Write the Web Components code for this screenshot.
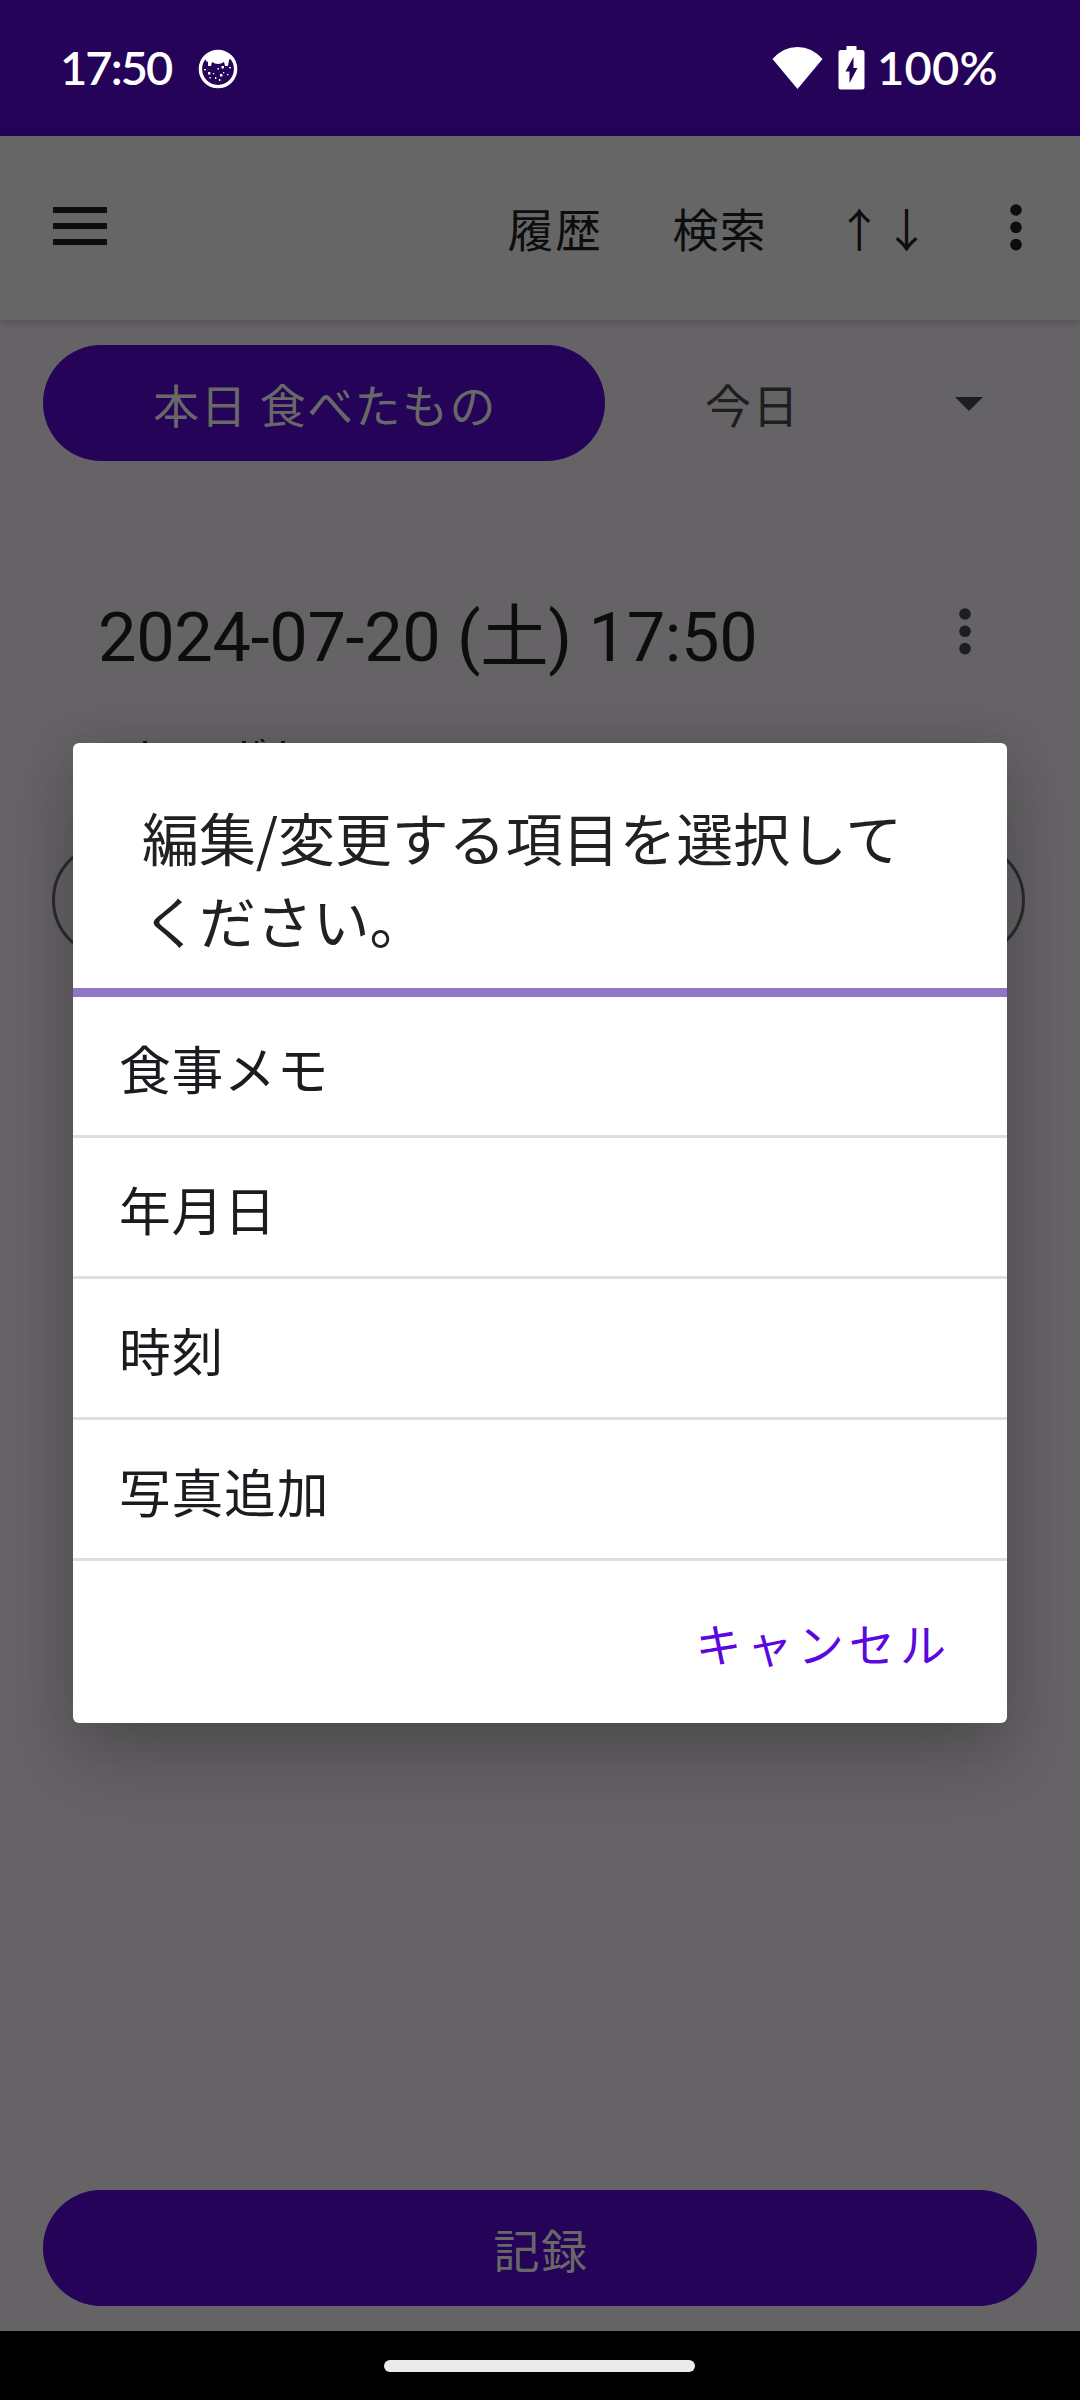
<!DOCTYPE html>
<html lang="ja">
<head>
<meta charset="utf-8">
<title>食事記録</title>
<style>
html,body{margin:0;padding:0}
body{width:1080px;height:2400px;overflow:hidden;background:#666366;font-family:"Noto Sans CJK JP",Roboto,sans-serif;font-size:46px}
</style>
</head>
<body>
<food-app></food-app>
<script>
const define = (name, html) => customElements.define(name, class extends HTMLElement {
  constructor() {
    super();
    this.attachShadow({ mode: 'open' }).innerHTML = html.trim();
  }
});

define('status-bar', `
<style>
:host{display:flex;align-items:center;height:136px;background:#250359;color:#fff;box-sizing:border-box;padding:2px 84px 0 60px;font:600 47px/60px Lato,sans-serif}
.time{width:137px;letter-spacing:-1.9px;margin-top:-4px}
.pct{letter-spacing:.2px;width:119px;white-space:nowrap;margin-top:-4px}
.grow{flex:1}
svg{display:block}
.wifi{margin:-3px 15px 0 0}.bat{margin:-3px 12px 0 0}
</style>
<span class="time">17:50</span>
<svg width="42" height="42" viewBox="0 0 42 42"><circle cx="21" cy="21" r="17.6" fill="none" stroke="#fff" stroke-width="3.4"/>
<path fill="#fff" d="M8 10Q14 3 21 3Q28 3 34 10L32 12L31 18L28 18L27 14Q21 18 15 14L14 18L11 18L11 14L9 13Z"/>
<g fill="#fff"><path d="M24.500 18h2.400v2.400h-2.400zM11 24h2.400v2.400H11zM23 26h2.400v2.400H23zM20.500 20h1.500v1.500h-1.500zM16 25h1.300v1.300H16zM26 24h1.300v1.300H26zM18 29h1.300v2H18zM22 31h1.300v2H22zM12.500 29h1.300v1.500h-1.300zM7 21h2v1.200H7zM32 19h2v1.200h-2zM30 26h1.500v1.200H30z"/></g></svg>
<span class="grow"></span>
<svg class="wifi" width="51" height="44" viewBox="0 0 51 44"><path fill="#fff" d="M.5 13Q11 1 25.500 1Q40 1 50.500 13L25.500 43Z"/></svg>
<svg class="bat" width="27" height="44" viewBox="0 0 27 44"><path fill="#fff" d="M8.500 0h10v4H24q2.500 0 2.500 2.500V41q0 2.500-2.500 2.500H3Q.5 43.500.5 41V6.500Q.5 4 3 4h5.500z"/><path fill="#250359" d="M15.500 11L7.500 25.500h4V37l8-15h-4z"/></svg>
<span class="pct">100%</span>`);

define('more-icon', `
<style>:host{display:block;width:12px;height:47px;white-space:normal;line-height:0}svg{display:block}</style>
<svg width="12" height="47" viewBox="0 0 12 47" fill="currentColor"><circle cx="6" cy="6" r="5.800"/><circle cx="6" cy="23.300" r="5.800"/><circle cx="6" cy="40.600" r="5.800"/></svg>`);

define('tool-bar', `
<style>
:host{display:flex;align-items:center;height:184px;box-sizing:border-box;padding:0 58px 0 53px;background:#666;color:#0d0d0e;position:relative;box-shadow:0 2px 9px rgba(0,0,0,.2)}
.menu{margin-top:-4px}
.grow{flex:1}
.acts{display:flex;gap:70px;line-height:68px;letter-spacing:1.4px;margin-top:-2px}
.acts span:last-child{margin-left:-1px}
more-icon{margin:-2px 0 0 79px}
</style>
<svg class="menu" width="54" height="38" viewBox="0 0 54 38" fill="currentColor"><path d="M0 0h54v6H0zM0 16h54v6H0zM0 32h54v6H0z"/></svg>
<span class="grow"></span>
<div class="acts"><span>履歴</span><span>検索</span><span>↑↓</span></div>
<more-icon></more-icon>`);

define('pill-button', `
<style>:host{display:flex;align-items:center;justify-content:center;box-sizing:border-box;height:116px;padding-left:2px;border-radius:58px;background:#250359;color:#686866;line-height:68px;letter-spacing:1.44px;white-space:nowrap}</style>
<slot></slot>`);

define('day-select', `
<style>:host{display:flex;align-items:center;justify-content:space-between;color:#1e1d20;line-height:68px;letter-spacing:1.4px}svg{display:block;margin-top:2px}</style>
<slot></slot><svg width="28" height="14" viewBox="0 0 28 14"><path fill="currentColor" d="M0 0h28L14 14z"/></svg>`);

define('meal-entry', `
<style>
:host{display:block}
.head{display:flex;justify-content:space-between;align-items:center;padding:2px 109px 0 98px;height:88px;font:400 68.500px/88px Roboto,"Noto Sans CJK JP",sans-serif;letter-spacing:-.34px;color:#0d0d0e;white-space:nowrap}
more-icon{color:#1e1d20;margin-top:-14px}
.note{display:block;margin:57px 0 0 140px}
.field{margin:99px 55px 0 52px;height:116px;border:3px solid #2c2a2d;border-radius:58px;box-sizing:border-box}
</style>
<div class="head"><slot></slot><more-icon></more-icon></div>
<svg class="note" width="150" height="4" viewBox="0 0 150 4" fill="#151516"><path d="M3 2h4v2H3zM102 2h4v2h-4zM115 2h3v2h-3zM120 0h3l2 3h-3zM141 2h4v2h-4z"/></svg>
<div class="field"></div>`);

define('choice-item', `
<style>:host{display:flex;align-items:center;box-sizing:border-box;height:141px;padding:3px 0 0 46px;border-bottom:3px solid #dfdfdf;font-size:51.75px;line-height:76px;letter-spacing:.8px;color:#1d1b20}</style>
<slot></slot>`);

define('choice-dialog', `
<style>
:host{position:absolute;left:73px;top:743px;width:934px;height:980px;border-radius:6px;background:#fff;box-shadow:0 0 50px rgba(0,0,0,.1),0 38px 76px rgba(0,0,0,.2);display:flex;flex-direction:column}
.title{box-sizing:border-box;height:245px;padding:52px 60px 0 69px;font-size:56.9px;line-height:83px;color:#212121}
.rule{height:9px;background:#9175c7}
.actions{flex:1;display:flex;align-items:center;justify-content:flex-end;padding-right:56px;color:#5b08e0;letter-spacing:5.1px;line-height:68px}
</style>
<div class="title"><slot name="title"></slot></div>
<div class="rule"></div>
<slot></slot>
<div class="actions"><slot name="action"></slot></div>`);

define('nav-bar', `
<style>:host{display:flex;justify-content:center;height:69px;background:#000}i{width:311px;height:12px;border-radius:6px;background:#ebebeb;margin:28.500px 2px 0 0}</style><i></i>`);

define('food-app', `
<style>
:host{display:flex;flex-direction:column;width:1080px;height:2400px;position:relative;background:#666366}
main{flex:1;display:flex;flex-direction:column;padding-top:25px}
.row{display:flex;padding:0 97px 0 43px}
.row pill-button{width:562px}
.row day-select{flex:1;margin-left:100px}
meal-entry{margin-top:131px}
.save{margin:auto 43px 25px}
</style>
<status-bar></status-bar>
<tool-bar></tool-bar>
<main>
<div class="row"><pill-button>本日 食べたもの</pill-button><day-select>今日</day-select></div>
<meal-entry>2024-07-20 (土) 17:50</meal-entry>
<pill-button class="save">記録</pill-button>
</main>
<nav-bar></nav-bar>
<choice-dialog>
<span slot="title">編集/変更する項目を選択してください。</span>
<choice-item>食事メモ</choice-item>
<choice-item>年月日</choice-item>
<choice-item>時刻</choice-item>
<choice-item>写真追加</choice-item>
<span slot="action">キャンセル</span>
</choice-dialog>`);
</script>
</body>
</html>
